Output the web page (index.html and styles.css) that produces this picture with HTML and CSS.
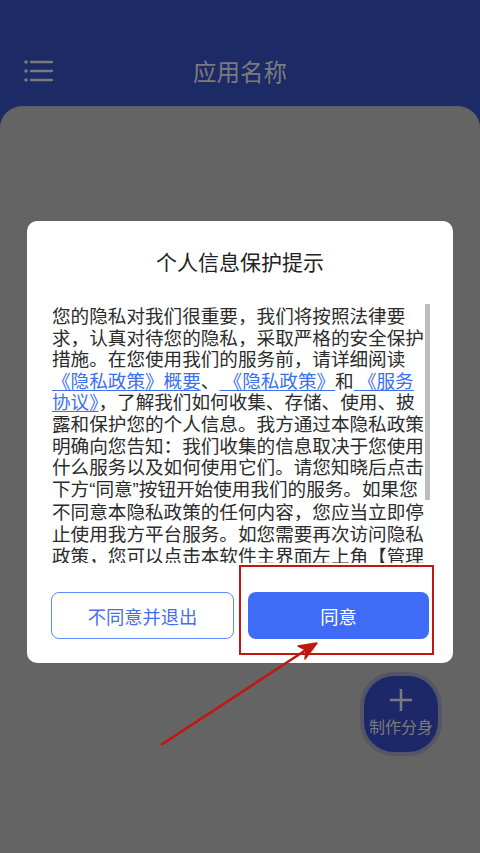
FILE: index.html
```html
<!DOCTYPE html>
<html lang="zh-CN">
<head>
    <meta charset="UTF-8">
    <meta name="viewport" content="width=device-width, initial-scale=1.0">
    <title>应用名称</title>
    <link rel="stylesheet" href="styles.css">
</head>
<body>
    <div class="app">
        <div class="header">
            <div class="menu-btn">
                <svg width="30" height="24" viewBox="0 0 30 24">
                    <circle cx="3" cy="3" r="1.8" fill="#7b7b7f"/>
                    <circle cx="3" cy="12" r="1.8" fill="#7b7b7f"/>
                    <circle cx="3" cy="21" r="1.8" fill="#7b7b7f"/>
                    <path d="M8 3H29M8 12H29M8 21H29" stroke="#7b7b7f" stroke-width="2.4" stroke-linecap="round"/>
                </svg>
            </div>
            <div class="title">应用名称</div>
        </div>
        <div class="content"></div>
    </div>

    <div class="fab">
        <svg class="fab-plus" width="22" height="22" viewBox="0 0 22 22">
            <path d="M11 0V22M0 11H22" stroke="#7b7b7f" stroke-width="2.6"/>
        </svg>
        <div class="fab-text">制作分身</div>
    </div>

    <!-- privacy dialog -->
    <div class="dialog">
        <div class="dialog-title">个人信息保护提示</div>
        <div class="dialog-body">
            <div class="scroll-text">
                您的隐私对我们很重要，我们将按照法律要<br>
                求，认真对待您的隐私，采取严格的安全保护<br>
                措施。在您使用我们的服务前，请详细阅读<br>
                <a href="#">《隐私政策》概要</a>、<a href="#">&nbsp;《隐私政策》</a>和<a href="#">&nbsp;《服务<br>协议》</a>，了解我们如何收集、存储、使用、披<br>
                露和保护您的个人信息。我方通过本隐私政策<br>
                明确向您告知：我们收集的信息取决于您使用<br>
                什么服务以及如何使用它们。请您知晓后点击<br>
                下方<span class="q">“</span>同意<span class="q">”</span>按钮开始使用我们的服务。如果您<br>
                不同意本隐私政策的任何内容，您应当立即停<br>
                止使用我方平台服务。如您需要再次访问隐私<br>
                政策，您可以点击本软件主界面左上角【管理<br>
                】按钮，查看隐私政策。
            </div>
            <div class="scroll-thumb"></div>
        </div>
        <div class="dialog-buttons">
            <button class="btn btn-outline">不同意并退出</button>
            <button class="btn btn-primary">同意</button>
        </div>
    </div>

    <!-- annotation -->
    <div class="mark-box"></div>
    <svg class="mark-arrow" width="480" height="853" viewBox="0 0 480 853">
        <path d="M161 745L312 646" stroke="#c3160f" stroke-width="2.6" fill="none"/>
        <path d="M317 643L298 646L306 650L305 659Z" fill="#c3160f" stroke="#c3160f" stroke-width="1.5" stroke-linejoin="round"/>
    </svg>
</body>
</html>
```

FILE: styles.css
```css
body {
    margin: 0;
    background-color: #1c2a66;
    font-family: "Noto Sans CJK SC", "Noto Sans", sans-serif;
}
.app {
    display: flex;
    flex-direction: column;
    height: 853px;
}
.header {
    height: 106px;
    display: flex;
    align-items: center;
    padding: 36px 0 0 23px;
    box-sizing: border-box;
}
.menu-btn {
    display: flex;
}
.title {
    flex: 1;
    text-align: center;
    margin-right: 53px;
    font-size: 23.5px;
    color: #7b7b7f;
}
.content {
    flex: 1;
    background-color: #646464;
    border-radius: 22px 22px 0 0;
    border-top: 1px solid #5e5f66;
}
.fab {
    position: absolute;
    left: 364px;
    top: 676px;
    width: 74px;
    height: 76px;
    border-radius: 30px;
    background-color: #1d2868;
    box-shadow: 0 0 0 4px rgba(60, 66, 110, 0.4);
    display: flex;
    flex-direction: column;
    align-items: center;
    color: #7b7b7f;
}
.fab-plus {
    margin-top: 13px;
}
.fab-text {
    font-size: 16px;
    line-height: 22px;
    margin-top: 4px;
}
.dialog {
    position: absolute;
    left: 27px;
    top: 221px;
    width: 426px;
    padding: 25px 0 24px;
    background-color: #fff;
    border-radius: 10px;
}
.dialog-title {
    text-align: center;
    font-size: 21px;
    line-height: 30px;
    color: #222;
}
.dialog-body {
    position: relative;
    margin: 28px 0 0 25px;
    width: 378px;
    height: 259px;
    overflow: hidden;
}
.scroll-text {
    font-size: 18.6px;
    line-height: 21.6px;
    color: #2b2b2b;
    white-space: nowrap;
}
.scroll-text a {
    color: #3a6ff0;
    text-decoration: underline;
    text-underline-offset: 2px;
    text-decoration-thickness: 1px;
}
.q {
    font-family: "Liberation Sans", sans-serif;
}
.scroll-thumb {
    position: absolute;
    right: 0;
    top: 0;
    width: 5px;
    height: 196px;
    background-color: #bdbdbd;
}
.dialog-buttons {
    display: flex;
    gap: 14px;
    padding: 0 24px;
    margin-top: 29px;
}
.btn {
    flex: 1;
    height: 47px;
    border-radius: 8px;
    font-family: inherit;
    font-size: 18.3px;
}
.btn-outline {
    background: #fff;
    border: 1.5px solid #5d8cf6;
    color: #4470f0;
}
.btn-primary {
    background: #3e6cf7;
    border: none;
    color: #fff;
}
.mark-box {
    position: absolute;
    left: 239px;
    top: 565px;
    width: 191px;
    height: 86px;
    border: 2px solid #c3160f;
}
.mark-arrow {
    position: absolute;
    left: 0;
    top: 0;
    pointer-events: none;
}
```
